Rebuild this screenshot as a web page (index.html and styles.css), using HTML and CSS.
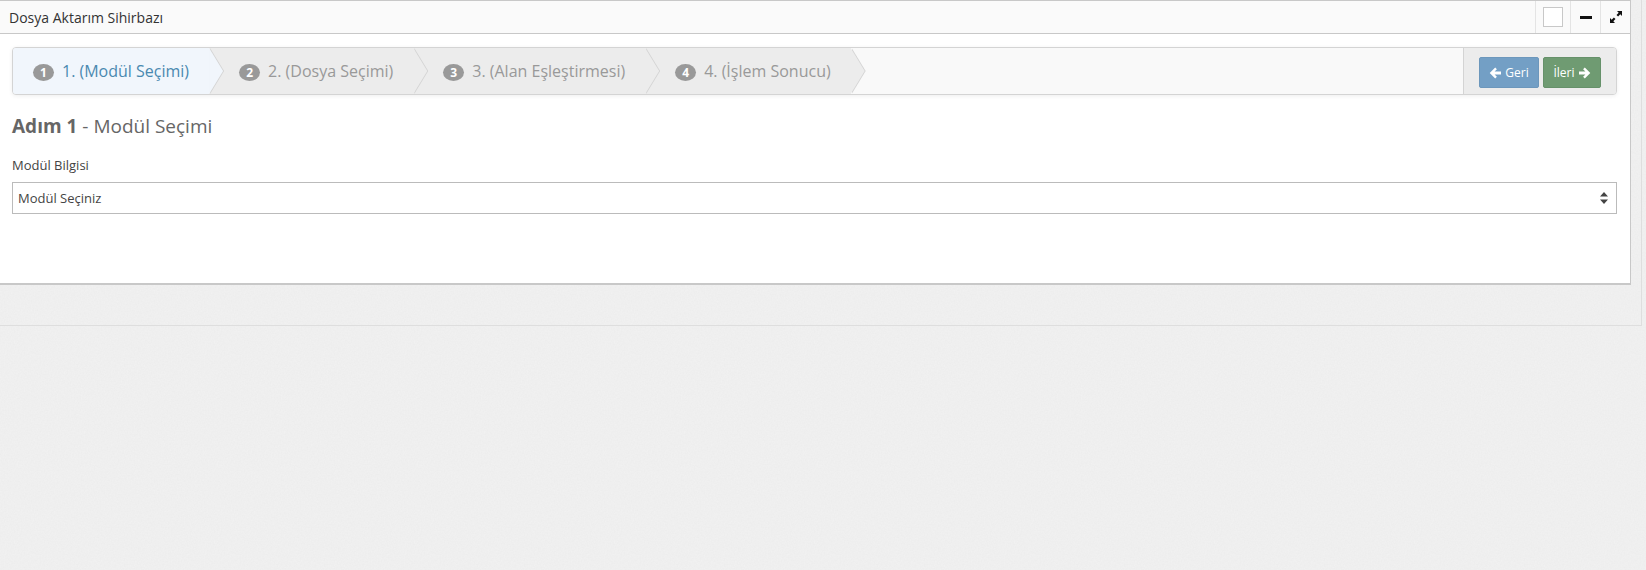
FILE: index.html
```html
<!DOCTYPE html>
<html lang="tr">
<head>
<meta charset="utf-8">
<title>Dosya Aktarım Sihirbazı</title>
<link rel="stylesheet" href="styles.css">
</head>
<body>
<div class="page">
  <section class="modal">
    <header class="modal-head">
      <h1 class="modal-title">Dosya Aktarım Sihirbazı</h1>
      <div class="head-tool tool-check"><span class="checkbox"></span></div>
      <div class="head-tool tool-min">
        <svg width="12" height="3" viewBox="0 0 12 3"><rect width="12" height="3" fill="#111"/></svg>
      </div>
      <div class="head-tool tool-max">
        <svg width="14" height="14" viewBox="0 0 14 14"><path d="M8 1h5v5l-1.700-1.700-2.200 2.200-1.600-1.600 2.200-2.200zM6 13H1V8l1.700 1.700 2.200-2.200 1.600 1.600-2.200 2.200z" fill="#111"/></svg>
      </div>
    </header>
    <div class="modal-body">
      <div class="wizard">
        <ul class="steps">
          <li class="step active"><span class="badge">1</span>1. (Modül Seçimi)</li>
          <li class="step"><span class="badge">2</span>2. (Dosya Seçimi)</li>
          <li class="step"><span class="badge">3</span>3. (Alan Eşleştirmesi)</li>
          <li class="step"><span class="badge">4</span>4. (İşlem Sonucu)</li>
        </ul>
        <div class="actions">
          <button class="btn btn-prev" type="button">
            <svg width="12" height="12" viewBox="0 0 12 12"><path d="M6.200.5l1.700 1.700L5.600 4.500H12v3H5.600l2.300 2.300-1.700 1.700L.7 6z" fill="#fff"/></svg>Geri
          </button>
          <button class="btn btn-next" type="button">İleri
            <svg width="12" height="12" viewBox="0 0 12 12"><path d="M5.800.5L4.100 2.200l2.300 2.300H0v3h6.400L4.100 9.800l1.700 1.700L11.300 6z" fill="#fff"/></svg>
          </button>
        </div>
      </div>
      <h2 class="step-title"><strong>Adım 1</strong> - Modül Seçimi</h2>
      <label class="field-label">Modül Bilgisi</label>
      <div class="select">
        <span>Modül Seçiniz</span>
        <svg width="8" height="12" viewBox="0 0 8 12"><path d="M4 0l4 4.500H0zM0 7.500h8L4 12z" fill="#444"/></svg>
      </div>
    </div>
  </section>
</div>
</body>
</html>
```
FILE: styles.css
```css
* { box-sizing: border-box; }
html, body { height: 100%; }
body {
  margin: 0;
  background-color: #f2f2f2;
  background-image: url("data:image/svg+xml,%3Csvg xmlns='http://www.w3.org/2000/svg' width='200' height='200'%3E%3Cfilter id='n'%3E%3CfeTurbulence type='fractalNoise' baseFrequency='.7' numOctaves='2' stitchTiles='stitch'/%3E%3CfeColorMatrix values='0 0 0 0 0 0 0 0 0 0 0 0 0 0 0 0 0 0 .025 0'/%3E%3C/filter%3E%3Crect width='200' height='200' filter='url(%23n)'/%3E%3C/svg%3E");
  font-family: "Open Sans", sans-serif;
  color: #333;
  overflow: hidden;
}
.page {
  width: 1642px;
  height: 326px;
  border-right: 1px solid #dedede;
  border-bottom: 1px solid #dedede;
}
.modal {
  width: 1631px;
  height: 285px;
  background: #fff;
  border-top: 1px solid #c8c8c8;
  border-right: 1px solid #c8c8c8;
  border-bottom: 2px solid #c8c8c8;
}
.modal-head {
  display: flex;
  align-items: stretch;
  height: 33px;
  background: #fafafa;
  border-bottom: 1px solid #c8c8c8;
}
.modal-title {
  flex: 1;
  margin: 0;
  padding-left: 9px;
  font-size: 14px;
  font-weight: 400;
  line-height: 34px;
  color: #333;
}
.head-tool {
  display: flex;
  align-items: center;
  justify-content: center;
  border-left: 1px solid #e4e4e4;
}
.tool-check { width: 35px; }
.tool-min { width: 30px; }
.tool-max { width: 30px; }
.checkbox {
  display: block;
  width: 20px;
  height: 20px;
  background: #fff;
  border: 1px solid #c8c8c8;
}
.modal-body { padding: 13px 13px 0 12px; }
.wizard {
  display: flex;
  justify-content: space-between;
  height: 48px;
  background: #f9f9f9;
  border: 1px solid #d4d4d4;
  border-radius: 4px;
  box-shadow: 0 1px 4px rgba(0, 0, 0, .065);
  overflow: hidden;
}
.steps {
  display: flex;
  margin: 0;
  padding: 0;
  list-style: none;
}
.step {
  position: relative;
  display: flex;
  align-items: center;
  height: 46px;
  padding: 0 20px 0 30px;
  background: #ececec;
  color: #999;
  font-size: 16px;
  white-space: nowrap;
}
.step:first-child { padding-left: 20px; }
.step.active { background: #f1f6fc; color: #4a89b0; }
.step::before,
.step::after {
  content: "";
  position: absolute;
  top: 0;
  left: 100%;
  width: 14px;
  height: 46px;
  clip-path: polygon(0 0, 100% 50%, 0 100%);
}
.step::before { z-index: 1; margin-left: 1px; background: #d4d4d4; }
.step::after { z-index: 2; background: #ececec; }
.step.active::after { background: #f1f6fc; }
.badge {
  display: inline-block;
  position: relative;
  top: 1px;
  width: 21px;
  height: 17px;
  margin-right: 8px;
  border-radius: 50%;
  background: #999;
  color: #fff;
  font-size: 12px;
  font-weight: 700;
  line-height: 17px;
  text-align: center;
}
.actions {
  display: flex;
  align-items: center;
  gap: 4px;
  width: 153px;
  padding-left: 15px;
  background: #ececec;
  border-left: 1px solid #d4d4d4;
}
.btn {
  display: flex;
  align-items: center;
  justify-content: center;
  gap: 4px;
  height: 31px;
  margin-top: 3px;
  padding: 0;
  border-radius: 2px;
  color: #fff;
  font-family: inherit;
  font-size: 12px;
  cursor: pointer;
}
.btn-prev { width: 60px; background: #739fc5; border: 1px solid #6c97bc; }
.btn-next { width: 58px; background: #6f9b72; border: 1px solid #66916a; }
.step-title {
  margin: 18px 0 0;
  font-size: 19px;
  font-weight: 400;
  line-height: 26px;
  color: #666;
}
.field-label {
  display: block;
  margin-top: 17px;
  font-size: 13px;
  line-height: 18px;
  color: #444;
}
.select {
  display: flex;
  align-items: center;
  justify-content: space-between;
  height: 32px;
  margin-top: 8px;
  padding: 0 8px 0 5px;
  border: 1px solid #bbb;
  background: #fff;
  font-size: 13px;
  color: #444;
}
```
